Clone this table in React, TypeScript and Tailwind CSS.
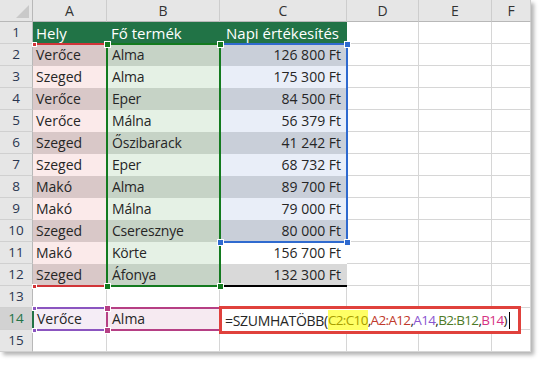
import React from 'react'

const font = "font-['Open_Sans','Noto_Sans',sans-serif]"

type Row = { n: number; a?: string; b?: string; c?: string }

const rows: Row[] = [
  { n: 2, a: 'Verőce', b: 'Alma', c: '126 800 Ft' },
  { n: 3, a: 'Szeged', b: 'Alma', c: '175 300 Ft' },
  { n: 4, a: 'Verőce', b: 'Eper', c: '84 500 Ft' },
  { n: 5, a: 'Verőce', b: 'Málna', c: '56 379 Ft' },
  { n: 6, a: 'Szeged', b: 'Őszibarack', c: '41 242 Ft' },
  { n: 7, a: 'Szeged', b: 'Eper', c: '68 732 Ft' },
  { n: 8, a: 'Makó', b: 'Alma', c: '89 700 Ft' },
  { n: 9, a: 'Makó', b: 'Málna', c: '79 000 Ft' },
  { n: 10, a: 'Szeged', b: 'Cseresznye', c: '80 000 Ft' },
  { n: 11, a: 'Makó', b: 'Körte', c: '156 700 Ft' },
  { n: 12, a: 'Szeged', b: 'Áfonya', c: '132 300 Ft' },
]

const grid = 'border-r border-b border-[#d6d6d6]'

function RowHead({ n, active }: { n: number; active?: boolean }) {
  return (
    <div
      className={
        'flex items-center justify-center border-r border-r-[#b8b8b8] border-b border-b-[#d0d0d0] text-[13.5px] ' +
        (active ? 'bg-[#d2d2d2] text-[#217346]' : 'bg-[#e6e6e6] text-[#2a3650]')
      }
    >
      {n}
    </div>
  )
}

function Empty() {
  return <div className={grid} />
}

function Handle({ className }: { className: string }) {
  return <div className={'absolute border border-white ' + className} />
}

export default function App() {
  return (
    <div className={`w-[549px] h-[368px] bg-white ${font} text-[14px] text-[#262626]`}>
      <div className="relative w-[531px] h-[352px] overflow-hidden bg-white shadow-[3px_3px_4px_rgba(0,0,0,0.3)]">
        <div className="grid grid-cols-[33px_74px_113px_127px_72px_73px_39px] grid-rows-[repeat(16,22px)] leading-none">
          {/* column headers */}
          <div className="relative bg-[#e6e6e6] border-r border-r-[#b8b8b8] border-b border-b-[#b8b8b8]">
            <svg width="33" height="22" className="absolute inset-0">
              <polygon points="29,5 29,18 16,18" fill="#c9c9c9" />
            </svg>
          </div>
          {['A', 'B', 'C', 'D', 'E', 'F'].map((l) => (
            <div
              key={l}
              className="flex items-center justify-center bg-[#e6e6e6] border-r border-r-[#cdcdcd] border-b border-b-[#b8b8b8] text-[14px] text-[#333]"
            >
              {l}
            </div>
          ))}

          {/* row 1 - table header */}
          <RowHead n={1} />
          <div className="flex items-center pl-[3px] bg-[#217346] text-white text-[15px]">Hely</div>
          <div className="flex items-center pl-[4px] bg-[#217346] text-white text-[15px]">Fő termék</div>
          <div className="flex items-center pl-[6px] bg-[#217346] text-white text-[15px]">Napi értékesítés</div>
          <Empty />
          <Empty />
          <Empty />

          {rows.map((r) => {
            const even = r.n % 2 === 0
            const cBg = r.n <= 10 ? (even ? 'bg-[#c9cfd9]' : 'bg-[#e9eef8]') : even ? 'bg-[#d9d9d9]' : 'bg-white'
            return (
              <React.Fragment key={r.n}>
                <RowHead n={r.n} />
                <div className={'flex items-center pl-[3px] ' + (even ? 'bg-[#d9c8c8]' : 'bg-[#fbeaea]')}>{r.a}</div>
                <div className={'flex items-center pl-[5px] tracking-[-0.2px] ' + (even ? 'bg-[#c6d3c6]' : 'bg-[#e5f1e5]')}>{r.b}</div>
                <div className={'flex items-center justify-end pr-[6px] ' + cBg}>{r.c}</div>
                <Empty />
                <Empty />
                <Empty />
              </React.Fragment>
            )
          })}

          {/* row 13 */}
          <RowHead n={13} />
          {[0, 1, 2, 3, 4, 5].map((i) => (
            <Empty key={i} />
          ))}

          {/* row 14 */}
          <RowHead n={14} active />
          <div className={'flex items-center pl-[4px] bg-[#f5edf6] ' + grid}>Verőce</div>
          <div className={'flex items-center pl-[5px] bg-[#f6eaf1] ' + grid}>Alma</div>
          <Empty />
          <Empty />
          <Empty />
          <Empty />

          {/* row 15 */}
          <RowHead n={15} />
          {[0, 1, 2, 3, 4, 5].map((i) => (
            <Empty key={i} />
          ))}
        </div>

        {/* range highlights */}
        <div className="absolute left-[33px] top-[43px] w-[74px] h-[244px] border-y-2 border-[#d13438]" />
        <div className="absolute left-[33px] top-[307px] w-[74px] h-[24px] border-y-2 border-[#8b55c0]" />
        <div className="absolute left-[220px] top-[285px] w-[127px] h-[2px] bg-black" />
        <div className="absolute left-[219px] top-[43px] w-[129px] h-[200px] border-2 border-[#2f6acf]" />
        <div className="absolute left-[106px] top-[43px] w-[115px] h-[244px] border-2 border-[#137a1f]" />
        <div className="absolute left-[106px] top-[307px] w-[115px] h-[24px] border-2 border-[#b63f84]" />
        <div className="absolute left-[32px] top-[308px] w-[2px] h-[22px] bg-[#217346]" />

        <Handle className="left-[32px] top-[42px] w-[5px] h-[5px] bg-[#d13438]" />
        <Handle className="left-[32px] top-[284px] w-[5px] h-[5px] bg-[#d13438]" />
        <Handle className="left-[32px] top-[306px] w-[5px] h-[5px] bg-[#8b55c0]" />
        <Handle className="left-[32px] top-[328px] w-[5px] h-[5px] bg-[#8b55c0]" />
        <Handle className="left-[344px] top-[41px] w-[7px] h-[7px] bg-[#2f6acf]" />
        <Handle className="left-[344px] top-[239px] w-[7px] h-[7px] bg-[#2f6acf]" />
        <Handle className="left-[217px] top-[239px] w-[7px] h-[7px] bg-[#2f6acf]" />
        <Handle className="left-[104px] top-[41px] w-[7px] h-[7px] bg-[#137a1f]" />
        <Handle className="left-[217px] top-[41px] w-[7px] h-[7px] bg-[#137a1f]" />
        <Handle className="left-[104px] top-[283px] w-[7px] h-[7px] bg-[#137a1f]" />
        <Handle className="left-[217px] top-[283px] w-[7px] h-[7px] bg-[#137a1f]" />
        <Handle className="left-[104px] top-[305px] w-[7px] h-[7px] bg-[#b63f84]" />
        <Handle className="left-[104px] top-[327px] w-[7px] h-[7px] bg-[#b63f84]" />

        {/* formula being edited in C14 */}
        <div className="absolute left-[219px] top-[306px] w-[302px] h-[28px] border-[3px] border-[#e0413c] bg-white flex items-center pl-[3px] whitespace-nowrap">
          <span className="tracking-[-0.3px]">=SZUMHATÖBB(</span>
          <span className="flex items-center text-[13.5px] tracking-[-0.65px]">
            <span className="bg-[#ffff66] text-[#a89d00]">C2:C10</span>
            <span>,</span>
            <span className="text-[#c0392b]">A2:A12</span>
            <span>,</span>
            <span className="text-[#8b55d0]">A14</span>
            <span>,</span>
            <span className="text-[#4e7a26]">B2:B12</span>
            <span>,</span>
            <span className="text-[#d63384]">B14</span>
            <span>)</span>
          </span>
          <span className="ml-[2px] w-[1px] h-[17px] bg-black" />
        </div>
      </div>
    </div>
  )
}
